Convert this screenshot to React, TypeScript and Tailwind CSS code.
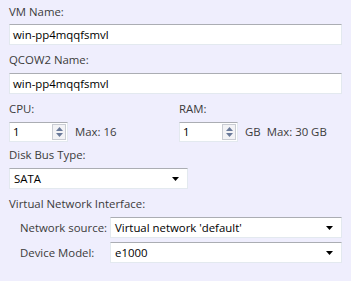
import React from 'react';

const font = { fontFamily: '"Open Sans", "Noto Sans", sans-serif' };

const TextBox: React.FC<{ value: string }> = ({ value }) => (
  <div className="h-[21px] w-full bg-white border border-[#e3e9ef] border-t-[#abadb3] flex items-center pl-[3px] text-black">
    {value}
  </div>
);

const Spinner: React.FC<{ value: string }> = ({ value }) => (
  <div className="h-[20px] w-[59px] bg-white border border-[#e3e9ef] border-t-[#abadb3] flex items-center text-black">
    <span className="flex-1 pl-[3px]">{value}</span>
    <div className="h-[16px] w-[14px] mr-px border border-[#c9ccd3] bg-[#f3f3f6] flex flex-col items-center justify-center gap-[2px]">
      <svg width="7" height="4" viewBox="0 0 7 4"><path d="M0 4 L3.5 0 L7 4 Z" fill="#6a7a9a" /></svg>
      <svg width="7" height="4" viewBox="0 0 7 4"><path d="M0 0 L3.5 4 L7 0 Z" fill="#6a7a9a" /></svg>
    </div>
  </div>
);

const Select: React.FC<{ value: string; className?: string }> = ({ value, className }) => (
  <div className={`h-[21px] bg-white border border-[#e3e9ef] border-t-[#abadb3] flex items-center pl-[4px] pr-[8px] text-black ${className ?? ''}`}>
    <span className="flex-1 whitespace-nowrap">{value}</span>
    <svg width="7" height="4" viewBox="0 0 7 4"><path d="M0 0 L7 0 L3.5 4 Z" fill="#000" /></svg>
  </div>
);

export default function App() {
  return (
    <div className="w-[351px] h-[281px] bg-[#efeefd] text-[11.4px] text-[#3b3b3b] pl-[9px] pr-[9px] pt-[4px]" style={font}>
      <div className="leading-4 mb-[4px]">VM Name:</div>
      <TextBox value="win-pp4mqqfsmvl" />
      <div className="leading-4 mt-[7px] mb-[5px]">QCOW2 Name:</div>
      <TextBox value="win-pp4mqqfsmvl" />

      <div className="flex mt-[7px]">
        <div className="w-[170px]">
          <div className="leading-4 mb-[5px]">CPU:</div>
          <div className="flex items-center gap-[7px]">
            <Spinner value="1" />
            <span>Max: 16</span>
          </div>
        </div>
        <div>
          <div className="leading-4 mb-[5px]">RAM:</div>
          <div className="flex items-center whitespace-nowrap">
            <Spinner value="1" />
            <span className="ml-[7px]">GB</span>
            <span className="ml-[6px]">Max: 30 GB</span>
          </div>
        </div>
      </div>

      <div className="leading-4 mt-[5px] mb-[5px]">Disk Bus Type:</div>
      <Select value="SATA" className="w-[179px]" />

      <div className="leading-4 mt-[7px] mb-[5px]">Virtual Network Interface:</div>
      <div className="pl-[11px] flex flex-col gap-[4px]">
        <div className="flex items-center">
          <span className="w-[90px] whitespace-nowrap">Network source:</span>
          <Select value="Virtual network 'default'" className="flex-1" />
        </div>
        <div className="flex items-center">
          <span className="w-[90px] whitespace-nowrap">Device Model:</span>
          <Select value="e1000" className="flex-1" />
        </div>
      </div>
    </div>
  );
}
